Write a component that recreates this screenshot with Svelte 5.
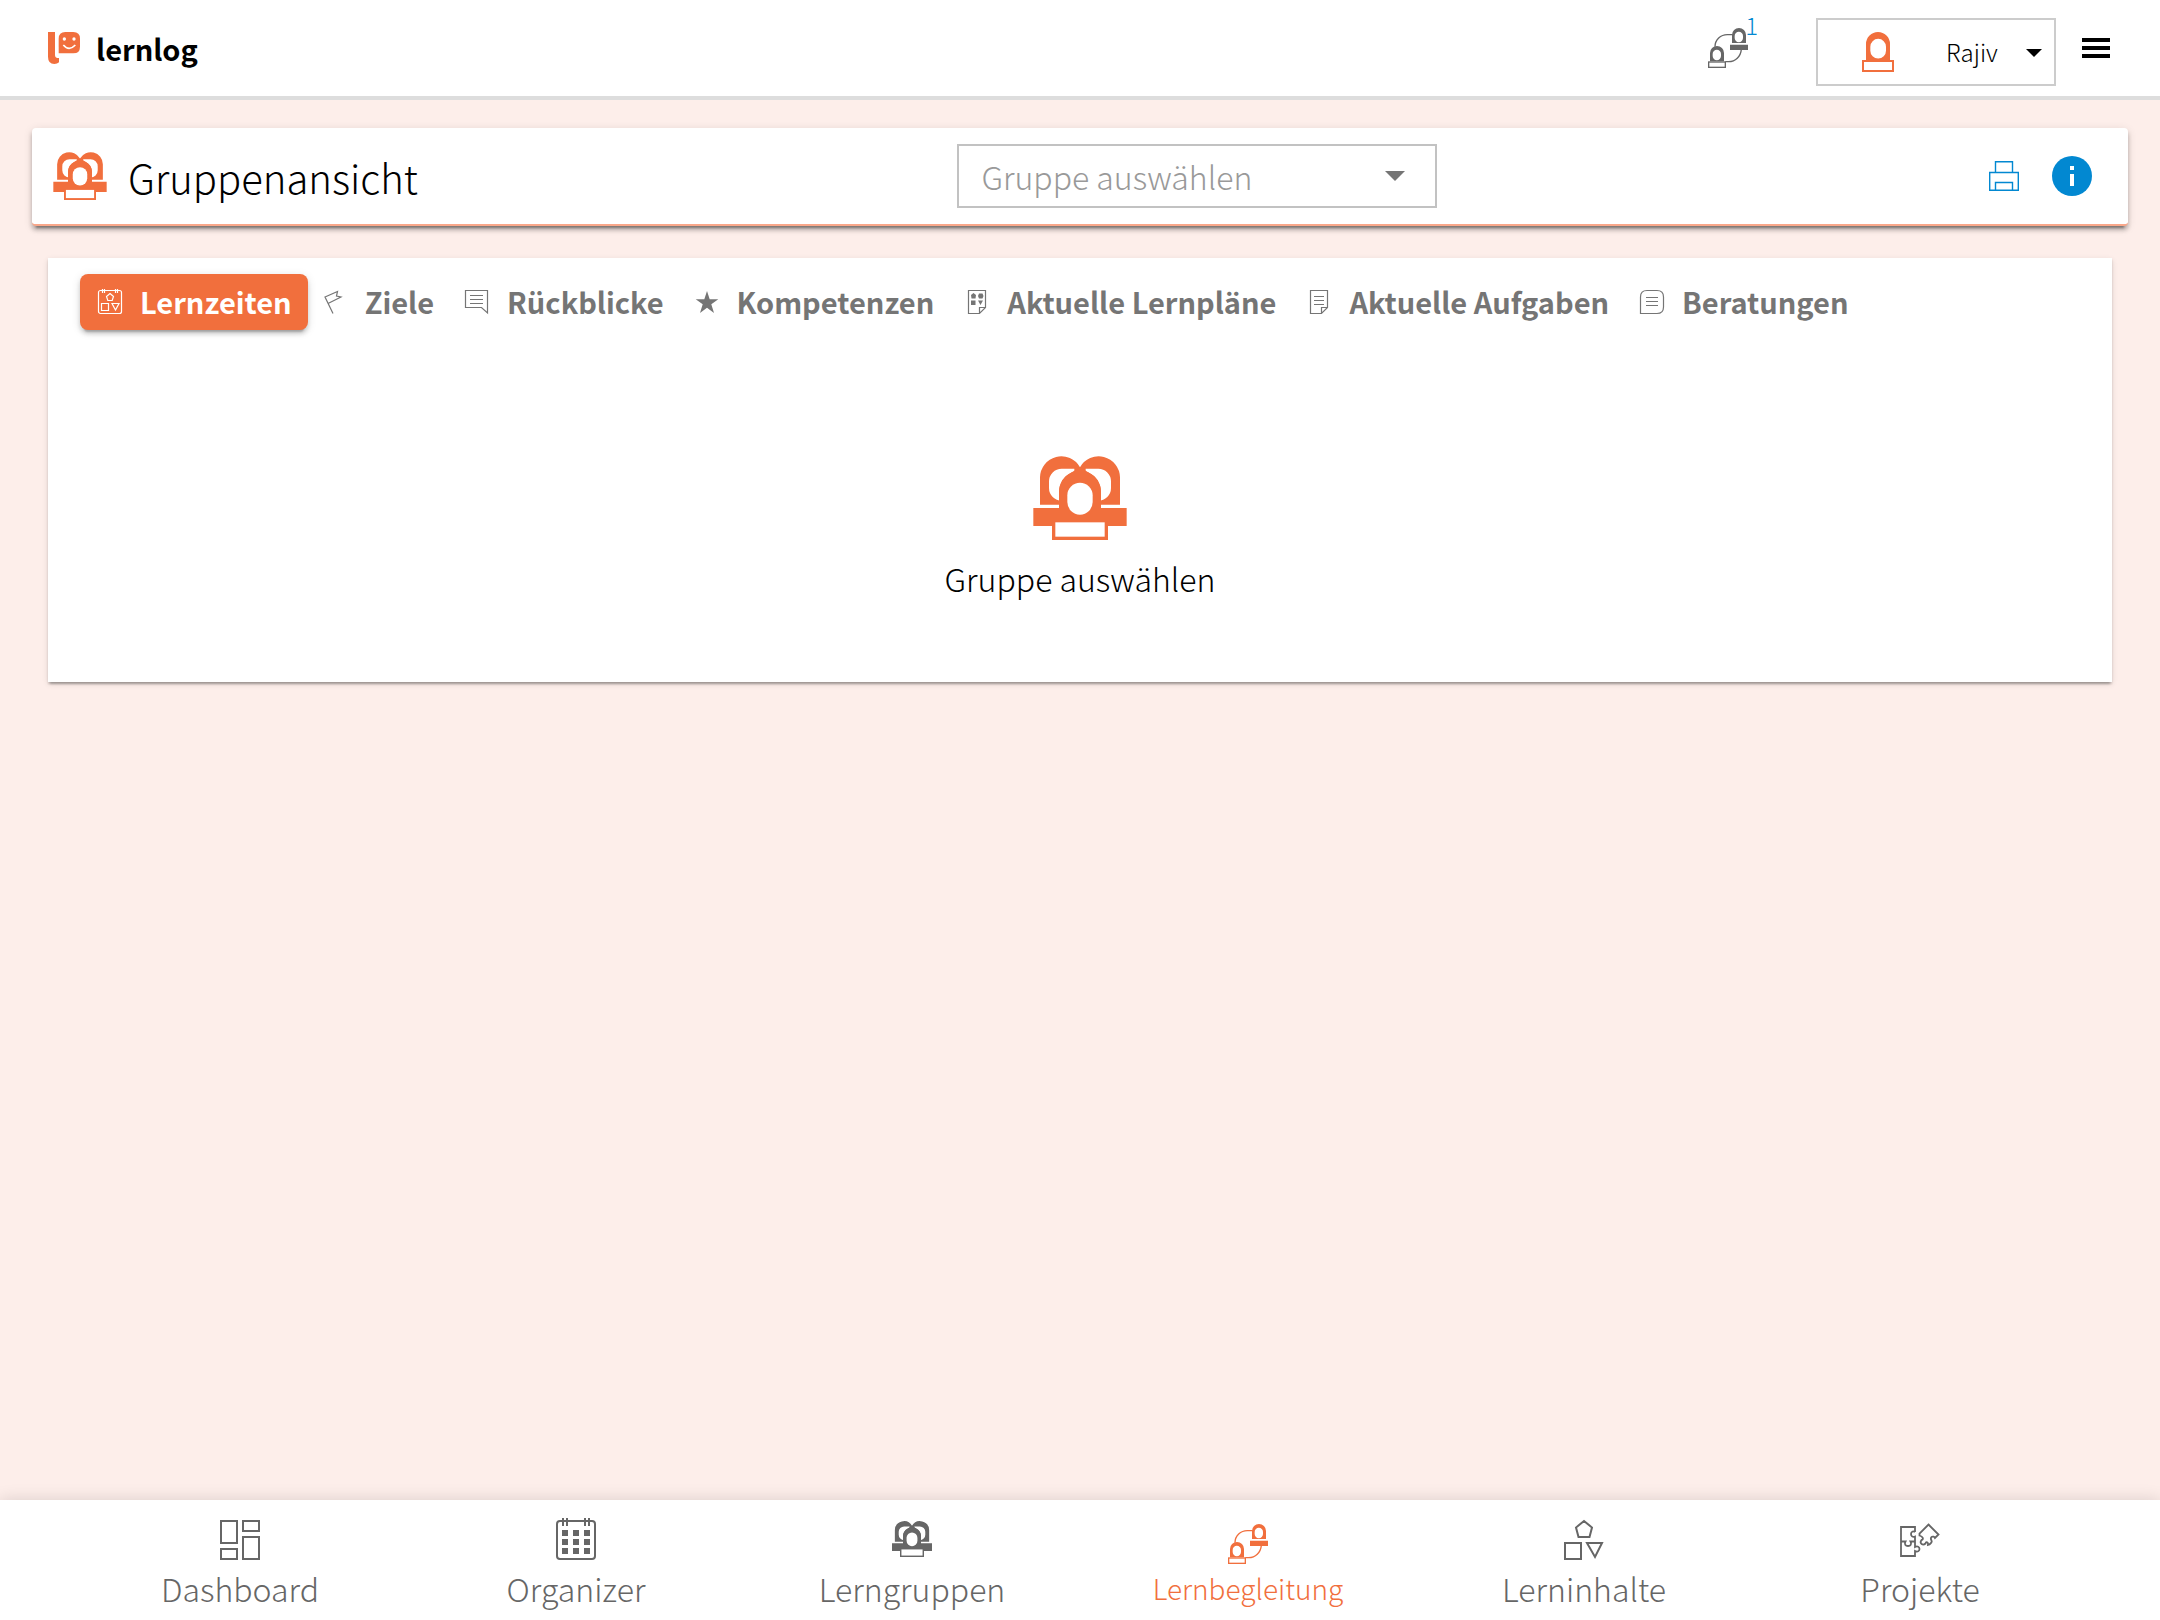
<script>
	// bottom navigation
	const navItems = [
		{ id: 'dashboard', title: 'Dashboard' },
		{ id: 'organizer', title: 'Organizer' },
		{ id: 'groups', title: 'Lerngruppen' },
		{ id: 'coaching', title: 'Lernbegleitung' },
		{ id: 'contents', title: 'Lerninhalte' },
		{ id: 'projects', title: 'Projekte' }
	];

	const tabs = [
		{ id: 'times', title: 'Lernzeiten' },
		{ id: 'goals', title: 'Ziele' },
		{ id: 'reviews', title: 'Rückblicke' },
		{ id: 'skills', title: 'Kompetenzen' },
		{ id: 'plans', title: 'Aktuelle Lernpläne' },
		{ id: 'tasks', title: 'Aktuelle Aufgaben' },
		{ id: 'advice', title: 'Beratungen' }
	];

	let activeTab = $state('times');
	let activeNav = $state('coaching');
	let group = $state('');
	let user = $state('Rajiv');
</script>

{#snippet groupIcon()}
	<svg class="icon-group" viewBox="0 0 280 252" aria-hidden="true">
		<path
			fill="currentColor"
			fill-rule="evenodd"
			d="M20 146V64A64 64 0 0 1 140 34A64 64 0 0 1 260 64V146Z M85 38A38 38 0 0 0 47 76V96A38 38 0 0 0 85 134H123V38Z M195 38A38 38 0 0 1 233 76V96A38 38 0 0 1 195 134H157V38Z"
		/>
		<path fill="currentColor" d="M77 156V107A63 63 0 0 1 203 107V156H280V210H224V252H56V210H0V156Z" />
		<path fill="currentColor" d="M77 107A63 63 0 0 1 113 50L140 34L167 50A63 63 0 0 1 203 107V156H77Z" />
		<rect x="102" y="80" width="76" height="96" rx="38" fill="#fff" />
		<rect x="66" y="199" width="148" height="43" fill="#fff" />
	</svg>
{/snippet}

{#snippet coachingIcon()}
	<svg class="icon-coaching" viewBox="0 0 120 120" aria-hidden="true">
		<path d="M21 56C21 35 38 20 58 20H74M100 64C98 86 82 101 62 101H52" fill="none" stroke="currentColor" stroke-width="4" />
		<path
			fill="currentColor"
			fill-rule="evenodd"
			d="M72 45V21A21 21 0 0 1 114 21V45Z M80 24V30A12 12 0 0 0 105 30V24A12 12 0 0 0 80 24Z M66 50H120V66H66Z"
		/>
		<path
			fill="currentColor"
			fill-rule="evenodd"
			d="M6 100V75A21 21 0 0 1 48 75V100Z M14 78V84A12 12 0 0 0 39 84V78A12 12 0 0 0 14 78Z"
		/>
		<rect x="2" y="102" width="50" height="16" fill="#fff" stroke="currentColor" stroke-width="4" />
	</svg>
{/snippet}

{#snippet tabIcon(id)}
	<svg class="tab-icon" viewBox="0 0 28 28" fill="none" stroke="currentColor" stroke-width="1.2" aria-hidden="true">
		{#if id === 'times'}
			<rect x="2.5" y="2.5" width="23" height="23" rx="2" />
			<path d="M6.500 1V5M8.500 1V5M19.500 1V5M21.500 1V5" />
			<path d="M14 5.500L17.500 8.500L16.200 12.500H11.800L10.500 8.500Z" />
			<path d="M5.500 15.500H12.500V22.500H5.500ZM16 15.500H23L19.500 22Z" />
		{:else if id === 'goals'}
			<path d="M12 25.500L4 9L16.500 3.500L15.500 8L20 9L7 15.500" />
		{:else if id === 'reviews'}
			<path d="M2.500 2.500H24.500V25L18.500 19.500H2.500Z" />
			<path d="M7 7.500H20M7 11.500H20M7 15.500H20" />
		{:else if id === 'skills'}
			<path
				fill="currentColor"
				stroke="none"
				d="M14 3L16.700 11.200H25.300L18.300 16.300L21 25L14 19.800L7 25L9.700 16.300L2.700 11.200H11.300Z"
			/>
		{:else if id === 'plans'}
			<path d="M5.500 2.500H22.500V19.500L16.500 25.500H5.500ZM16.500 25.500V19.500H22.500" />
			<path
				fill="currentColor"
				stroke="none"
				d="M10.500 5L13 7L12.500 10.500H8.500L8 7ZM16 5.500H19.500L20.500 8L19.500 10.500H16L15 8ZM8 12.500H12.500V17H8ZM15 12.500H20L17.500 17Z"
			/>
		{:else if id === 'tasks'}
			<path d="M5.500 2.500H22.500V19.500L16.500 25.500H5.500ZM16.500 25.500V19.500H22.500" />
			<path d="M9 8.500H19M9 12.500H19M9 16.500H19" />
		{:else}
			<path d="M2.500 25.500V9Q2.500 2.500 9 2.500H19Q25.500 2.500 25.500 9V19Q25.500 25.500 19 25.500Z" />
			<path d="M8 9.500H20M8 13.500H20M8 17.500H20" />
		{/if}
	</svg>
{/snippet}

{#snippet navIcon(id)}
	{#if id === 'groups'}
		{@render groupIcon()}
	{:else if id === 'coaching'}
		{@render coachingIcon()}
	{:else}
		<svg viewBox="0 0 40 42" fill="none" stroke="currentColor" stroke-width="2" aria-hidden="true">
			{#if id === 'dashboard'}
				<path d="M1 3H17V25H1ZM23 3H39V13H23ZM1 31H17V41H1ZM23 19H39V41H23Z" />
			{:else if id === 'organizer'}
				<rect x="1" y="3" width="38" height="38" rx="3" />
				<path d="M7 0V8M11 0V8M29 0V8M33 0V8" />
				<path
					fill="currentColor"
					stroke="none"
					d="M6 12H12V18H6ZM17 12H23V18H17ZM28 12H34V18H28ZM6 21H12V27H6ZM17 21H23V27H17ZM28 21H34V27H28ZM6 30H12V36H6ZM17 30H23V36H17ZM28 30H34V36H28Z"
				/>
			{:else if id === 'contents'}
				<path d="M20 3L28 9.500L25.500 19H14.500L12 9.500ZM1 25H17V41H1ZM23 25H38L31 39Z" />
			{:else}
				<path
					stroke-width="1.800"
					d="M15 14V9H1V38H15V33C17.500 34.500 19.500 33 19.500 31C19.500 29 17.500 27.500 15 29V18.500C12.500 19.500 11 18 11 16C11 14.500 12.500 12.500 15 14M1 23.500H5.500C4 26 5.500 28 8 28C10.500 28 12 26 10.500 23.500H15"
				/>
				<path
					stroke-width="1.800"
					d="M28.500 6.500L38.500 16.500L35 20C33.500 17 29.500 19 31.500 22.500C32.500 24 30 26.500 28 27C28.500 24 26 23 25.500 25.500C23 28 19 25.500 21.500 22C24 21.500 23 18.500 19.500 17.500V15.500Z"
				/>
			{/if}
		</svg>
	{/if}
{/snippet}

<div class="page">
	<header class="topbar">
		<a class="brand" href="/">
			<svg class="logo" viewBox="0 0 96 96" aria-hidden="true">
				<path fill="#f16f3d" d="M0 0H21V70Q21 78 27 78H33V91Q28 96 19 96Q0 95 0 74Z" />
				<path fill="#f16f3d" d="M32 20Q32 0 52 0H76Q96 0 96 20V44Q96 64 76 64H32Z" />
				<circle cx="49" cy="21" r="5" fill="#fff" />
				<circle cx="78" cy="21" r="5" fill="#fff" />
				<path d="M46 39Q63 59 82 39" fill="none" stroke="#fff" stroke-width="5" />
			</svg>
			<span>lernlog</span>
		</a>

		<button class="notify" aria-label="Lernbegleitung, 1 neue Nachricht">
			{@render coachingIcon()}
			<span class="badge">1</span>
		</button>

		<div class="user">
			<svg class="avatar" viewBox="0 0 96 120" aria-hidden="true">
				<path
					fill="#f16f3d"
					fill-rule="evenodd"
					d="M12 86V36A36 36 0 0 1 84 36V86Z M25 44V56A23 23 0 0 0 72 56V44A23 23 0 0 0 25 44Z"
				/>
				<rect x="3" y="87" width="90" height="30" fill="#fff" stroke="#f16f3d" stroke-width="6" />
			</svg>
			<select bind:value={user} aria-label="Benutzer">
				<option>Rajiv</option>
			</select>
			<svg class="caret" viewBox="0 0 16 8" aria-hidden="true"><path d="M0 0H16L8 8Z" fill="#000" /></svg>
		</div>

		<button class="menu" aria-label="Menü">
			<svg viewBox="0 0 28 20" aria-hidden="true"><path d="M0 0H28V4H0ZM0 8H28V12H0ZM0 16H28V20H0Z" fill="#000" /></svg>
		</button>
	</header>

	<main>
		<section class="toolbar">
			<div class="heading">
				{@render groupIcon()}
				<h1>Gruppenansicht</h1>
			</div>
			<div class="group-select">
				<select bind:value={group} aria-label="Gruppe">
					<option value="">Gruppe auswählen</option>
				</select>
				<svg class="caret" viewBox="0 0 20 10" aria-hidden="true"><path d="M0 0H20L10 10Z" fill="#757575" /></svg>
			</div>
			<div class="actions">
				<button aria-label="Drucken">
					<svg class="print" viewBox="0 0 30 30" fill="none" stroke="#0288d1" stroke-width="1.4" aria-hidden="true">
						<path d="M6.500 11V0.700H23.500V11M6.500 29.300H0.700V11.500H29.300V29.300H6.500V21.500H23.500V29.500" />
					</svg>
				</button>
				<button aria-label="Information">
					<svg class="info" viewBox="0 0 40 40" aria-hidden="true">
						<circle cx="20" cy="20" r="20" fill="#0288d1" />
						<path d="M18 10H22V14H18ZM18 18H22V30H18Z" fill="#fff" />
					</svg>
				</button>
			</div>
		</section>

		<section class="panel">
			<div class="tabs" role="tablist">
				{#each tabs as tab (tab.id)}
					<button
						role="tab"
						class="tab"
						class:active={activeTab === tab.id}
						aria-selected={activeTab === tab.id}
						onclick={() => (activeTab = tab.id)}
					>
						{@render tabIcon(tab.id)}
						<span>{tab.title}</span>
					</button>
				{/each}
			</div>
			<div class="empty">
				{@render groupIcon()}
				<p>Gruppe auswählen</p>
			</div>
		</section>
	</main>

	<nav class="bottom-nav">
		{#each navItems as item (item.id)}
			<a
				href="#{item.id}"
				class:active={activeNav === item.id}
				aria-current={activeNav === item.id ? 'page' : undefined}
				onclick={() => (activeNav = item.id)}
			>
				<span class="nav-icon">{@render navIcon(item.id)}</span>
				<span class="label">{item.title}</span>
			</a>
		{/each}
	</nav>
</div>

<style>
	:global(body) {
		margin: 0;
	}

	.page {
		display: flex;
		flex-direction: column;
		min-height: 100vh;
		background: #fdeeea;
		color: #000;
		font-family: 'Source Sans Pro', 'Noto Sans CJK SC', 'Noto Sans', sans-serif;
		font-weight: 300;
	}

	svg {
		display: block;
		flex-shrink: 0;
	}

	button,
	select {
		margin: 0;
		padding: 0;
		border: 0;
		background: none;
		color: inherit;
		font: inherit;
		cursor: pointer;
	}

	select {
		appearance: none;
	}

	a {
		color: inherit;
		text-decoration: none;
	}

	/* top bar */
	.topbar {
		display: flex;
		align-items: center;
		height: 96px;
		padding: 0 50px 0 48px;
		border-bottom: 4px solid #ddd;
		background: #fff;
	}

	.brand {
		display: flex;
		align-items: center;
		gap: 16px;
		margin-right: auto;
		font-size: 29px;
		font-weight: 700;
		line-height: 40px;
	}

	.logo {
		width: 32px;
		height: 32px;
	}

	.notify {
		position: relative;
		margin-right: 68px;
		color: #666;
	}

	.icon-coaching {
		width: 40px;
		height: 40px;
	}

	.badge {
		position: absolute;
		top: -17px;
		right: -10px;
		color: #0288d1;
		font-size: 24px;
		line-height: 28px;
	}

	.user {
		position: relative;
		display: flex;
		align-items: center;
		box-sizing: border-box;
		width: 240px;
		height: 68px;
		margin: 8px 26px 0 0;
		padding-left: 44px;
		border: 2px solid #ccc;
	}

	.avatar {
		width: 32px;
		height: 40px;
	}

	.user select {
		flex: 1;
		align-self: stretch;
		padding-left: 52px;
		font-size: 24px;
		line-height: 36px;
	}

	.user .caret {
		position: absolute;
		top: 29px;
		right: 12px;
		width: 16px;
		height: 8px;
		pointer-events: none;
	}

	.menu svg {
		width: 28px;
		height: 20px;
	}

	/* content */
	main {
		flex: 1;
		padding: 28px 32px;
	}

	.toolbar {
		display: flex;
		align-items: center;
		justify-content: space-between;
		height: 96px;
		padding: 0 36px 0 21px;
		border-bottom: 2px solid #f9a78a;
		border-radius: 4px;
		background: #fff;
		box-shadow:
			0 6px 2px -4px rgba(0, 0, 0, 0.3),
			0 4px 4px rgba(0, 0, 0, 0.24),
			0 2px 10px rgba(0, 0, 0, 0.12);
	}

	.heading {
		display: flex;
		align-items: center;
		gap: 21px;
	}

	.heading .icon-group {
		width: 54px;
		height: 48px;
	}

	h1 {
		margin: 0;
		padding-top: 2px;
		font-size: 40px;
		font-weight: 300;
		line-height: 56px;
	}

	.group-select {
		position: relative;
		display: flex;
		align-items: center;
		box-sizing: border-box;
		width: 480px;
		height: 64px;
		border: 2px solid #c2c2c2;
		color: #999;
	}

	.group-select select {
		flex: 1;
		align-self: stretch;
		padding-left: 22px;
		font-size: 32px;
	}

	.group-select .caret {
		position: absolute;
		right: 30px;
		width: 20px;
		height: 10px;
		pointer-events: none;
	}

	.actions {
		display: flex;
		align-items: center;
		justify-content: flex-end;
		gap: 21px;
	}

	.print {
		width: 30px;
		height: 30px;
		padding: 0 12px;
	}

	.info {
		width: 40px;
		height: 40px;
	}

	.panel {
		margin: 32px 16px 0;
		padding: 16px 32px 80px;
		background: #fff;
		box-shadow:
			0 4px 2px -2px rgba(0, 0, 0, 0.2),
			0 2px 2px rgba(0, 0, 0, 0.14),
			0 2px 6px rgba(0, 0, 0, 0.12);
	}

	.tabs {
		display: flex;
		flex-wrap: wrap;
	}

	.tab {
		display: flex;
		align-items: center;
		gap: 16px;
		height: 56px;
		margin-right: -3px;
		padding: 0 16px;
		border-radius: 8px;
		color: #757575;
		font-size: 29px;
		font-weight: 700;
		line-height: 40px;
		white-space: nowrap;
	}

	.tab span {
		padding-bottom: 2px;
	}

	.tab.active {
		background: #f16f3d;
		color: #fff;
		box-shadow:
			0 6px 2px -4px rgba(0, 0, 0, 0.2),
			0 4px 4px rgba(0, 0, 0, 0.14),
			0 2px 10px rgba(0, 0, 0, 0.12);
	}

	.tab-icon {
		width: 28px;
		height: 28px;
	}

	.empty {
		display: flex;
		flex-direction: column;
		align-items: center;
		gap: 14px;
		margin-top: 126px;
	}

	.heading .icon-group,
	.empty .icon-group {
		color: #f16f3d;
	}

	.empty .icon-group {
		width: 94px;
		height: 84px;
	}

	.empty p {
		margin: 0;
		font-size: 32px;
		line-height: 48px;
	}

	/* bottom navigation */
	.bottom-nav {
		display: flex;
		box-sizing: border-box;
		height: 120px;
		padding: 18px 72px 0;
		background: #fff;
		color: #666;
		box-shadow: 0 0 16px rgba(0, 0, 0, 0.14);
	}

	.bottom-nav a {
		display: flex;
		flex: 1;
		flex-direction: column;
		align-items: center;
		gap: 4px;
		font-size: 32px;
		line-height: 48px;
	}

	.bottom-nav a.active {
		gap: 0;
		color: #f16f3d;
		font-size: 28px;
	}

	.nav-icon {
		display: flex;
		align-items: center;
		justify-content: center;
		height: 42px;
	}

	.active .nav-icon {
		align-items: flex-end;
		height: 46px;
	}

	.nav-icon svg {
		width: 40px;
		height: 42px;
	}

	.nav-icon .icon-group {
		height: 36px;
	}

	.nav-icon .icon-coaching {
		height: 40px;
	}
</style>
